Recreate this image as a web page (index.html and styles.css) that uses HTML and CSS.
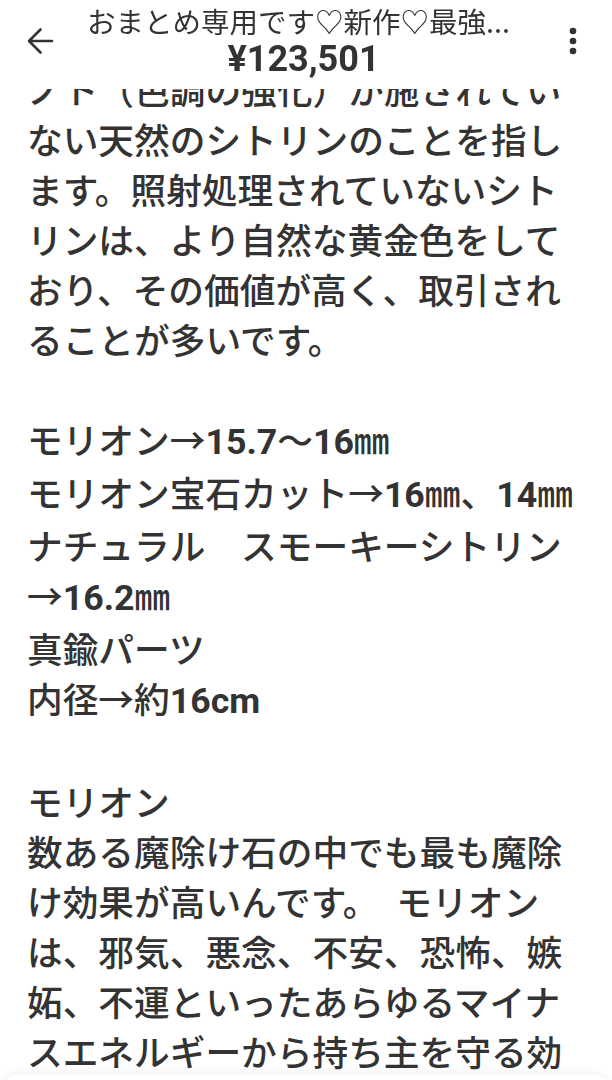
FILE: index.html
```html
<!DOCTYPE html>
<html lang="ja">
<head>
<meta charset="utf-8">
<title>おまとめ専用です</title>
<link rel="stylesheet" href="styles.css">
</head>
<body>
<header class="topbar">
  <button class="icon-btn back" aria-label="戻る">
    <svg width="30" height="30" viewBox="0 0 30 30"><path d="M27 15H4M15.5 3.5L4 15l11.5 11.5" fill="none" stroke="#333" stroke-width="2.6" stroke-linecap="round" stroke-linejoin="round"/></svg>
  </button>
  <div class="titles">
    <div class="title">おまとめ専用です♡新作♡最強...</div>
    <div class="price">¥123,501</div>
  </div>
  <button class="icon-btn more" aria-label="メニュー">
    <svg width="12" height="28" viewBox="0 0 12 28"><circle cx="6" cy="4" r="3.3" fill="#333"/><circle cx="6" cy="14" r="3.3" fill="#333"/><circle cx="6" cy="24" r="3.3" fill="#333"/></svg>
  </button>
</header>
<main class="desc">
  <p>ノト（色調の強化）が施されていない天然のシトリンのことを指します。照射処理されていないシトリンは、より自然な黄金色をしており、その価値が高く、取引されることが多いです。</p>
  <p class="blank"></p>
  <p>モリオン→<span class="num">15.7</span>〜<span class="num">16</span>㎜</p>
  <p>モリオン宝石カット→<span class="num">16</span>㎜、<span class="num">14</span>㎜</p>
  <p>ナチュラル　スモーキーシトリン→<span class="num">16.2</span>㎜</p>
  <p>真鍮パーツ</p>
  <p>内径→約<span class="num">16cm</span></p>
  <p class="blank"></p>
  <p>モリオン</p>
  <p>数ある魔除け石の中でも最も魔除け効果が高いんです。　モリオンは、邪気、悪念、不安、恐怖、嫉妬、不運といったあらゆるマイナスエネルギーから持ち主を守る効果があります。</p>
</main>
<div class="sheet-edge"></div>
</body>
</html>
```
FILE: styles.css
```css
* { box-sizing: border-box; }
html, body { margin: 0; padding: 0; background: #fff; }
body {
  width: 612px;
  height: 1080px;
  overflow: hidden;
  font-family: "Noto Sans CJK JP", "Noto Sans", sans-serif;
  color: #333;
}
.topbar {
  position: fixed;
  top: 0; left: 0; right: 0;
  height: 89px;
  background: #fff;
  display: flex;
  align-items: flex-start;
  z-index: 2;
}
.icon-btn {
  border: 0;
  background: none;
  padding: 0;
  display: flex;
  align-items: center;
  justify-content: center;
}
.back { width: 80px; height: 82px; }
.more { width: 80px; height: 82px; margin-right: -1px; }
.titles {
  flex: 1;
  display: flex;
  flex-direction: column;
  align-items: center;
  padding-top: 3px;
  padding-right: 6px;
}
.title {
  font-size: 28.5px;
  line-height: 36px;
  color: #333;
  white-space: nowrap;
  margin-right: 10px;
}
.price {
  font-family: Roboto, "Noto Sans CJK JP", sans-serif;
  font-weight: 700;
  font-size: 36px;
  line-height: 40px;
  color: #333;
}
.desc {
  padding: 64px 30px 0 27px;
  font-size: 35.7px;
  line-height: 50px;
  font-weight: 500;
}
.desc p { margin: 0; }
.desc .blank { height: 50px; }
.num {
  font-family: Roboto, sans-serif;
  font-weight: 700;
}
.sheet-edge {
  position: fixed;
  left: 0; right: 0; bottom: -14px;
  height: 20px;
  border-radius: 24px 24px 0 0;
  background: #fff;
  box-shadow: 0 -2px 8px rgba(0,0,0,0.06);
  z-index: 3;
}
```
